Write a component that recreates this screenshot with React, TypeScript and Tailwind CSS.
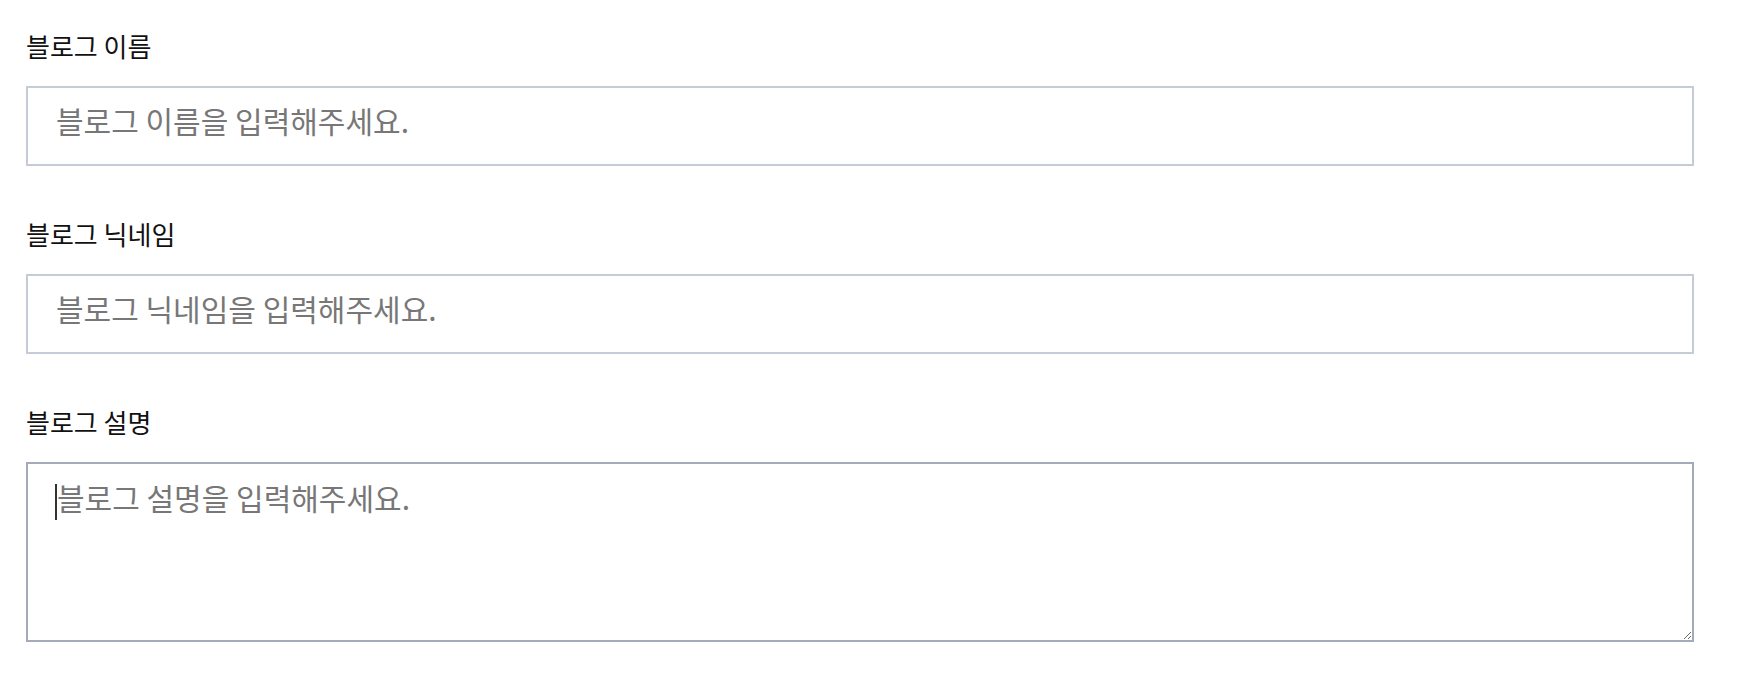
const fieldFont = {
  fontFamily: '"Noto Sans CJK KR", "Noto Sans", sans-serif',
}

type FieldProps = {
  label: string
  placeholder: string
}

const FieldLabel = ({ children }: { children: string }) => (
  <label className="mb-[22px] text-[26px] leading-[36px] text-[#111]">
    {children}
  </label>
)

const InputField = ({ label, placeholder }: FieldProps) => {
  return (
    <div className="flex flex-col">
      <FieldLabel>{label}</FieldLabel>
      <input
        type="text"
        placeholder={placeholder}
        className="box-border h-[80px] w-full border-2 border-[#c6ccd7] bg-white px-[28px] pb-[13px] text-[30px] text-[#222] outline-none placeholder:text-[#777]"
      />
    </div>
  )
}

const TextareaField = ({ label, placeholder }: FieldProps) => {
  return (
    <div className="flex flex-col">
      <FieldLabel>{label}</FieldLabel>
      <div className="relative">
        <textarea
          autoFocus
          placeholder={placeholder}
          className="box-border block h-[180px] w-full resize-y border-2 border-[#a4aab8] bg-white px-[29px] pt-[15px] text-[30px] leading-[36px] text-[#222] outline-none placeholder:text-[#777]"
        />
        {/* text caret as in the focused state */}
        <span className="pointer-events-none absolute left-[29px] top-[22px] h-[36px] w-[2px] bg-[#333]" />
      </div>
    </div>
  )
}

export default function App() {
  return (
    <div
      className="min-h-[698px] bg-white pt-[28px] pl-[26px] pr-[46px]"
      style={fieldFont}
    >
      <div className="flex flex-col gap-[50px]">
        <InputField label="블로그 이름" placeholder="블로그 이름을 입력해주세요." />
        <InputField
          label="블로그 닉네임"
          placeholder="블로그 닉네임을 입력해주세요."
        />
        <TextareaField
          label="블로그 설명"
          placeholder="블로그 설명을 입력해주세요."
        />
      </div>
    </div>
  )
}
